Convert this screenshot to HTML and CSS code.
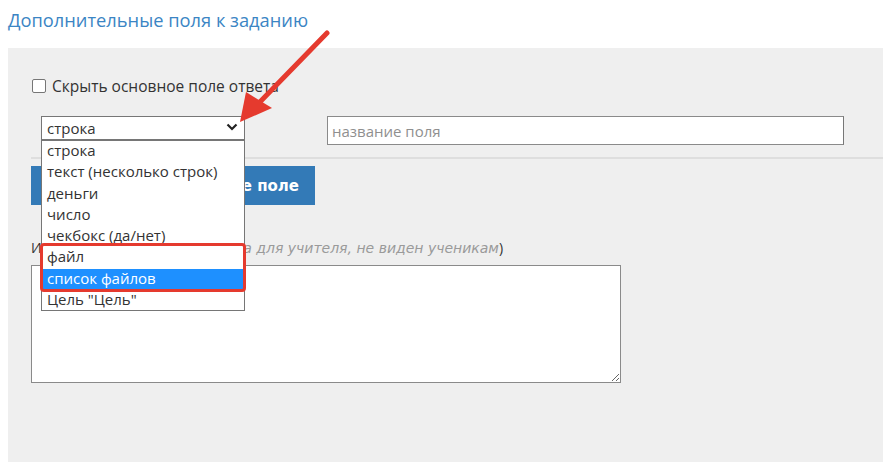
FILE: index.html
```html
<!DOCTYPE html>
<html lang="ru">

<head>
    <meta charset="UTF-8">
    <meta name="viewport" content="width=device-width, initial-scale=1.0">
    <title>Дополнительные поля</title>
    <link rel="stylesheet" href="styles.css">
</head>

<body>
    <h3 class="title">Дополнительные поля к заданию</h3>
    <div class="panel">
        <label class="hide-main">
            <span class="check"></span>
            Скрыть основное поле ответа
        </label>

        <div class="field-row">
            <div class="select-wrap">
                <div class="select">
                    <span>строка</span>
                    <svg class="chevron" width="12" height="8" viewBox="0 0 12 8">
                        <path d="M1.5 1.5 L6 6 L10.5 1.5" fill="none" stroke="#222" stroke-width="2.2" />
                    </svg>
                </div>
                <ul class="options">
                    <li>строка</li>
                    <li>текст (несколько строк)</li>
                    <li>деньги</li>
                    <li>число</li>
                    <li>чекбокс (да/нет)</li>
                    <li>файл</li>
                    <li class="selected">список файлов</li>
                    <li>Цель "Цель"</li>
                </ul>
                <div class="mark"></div>
            </div>
            <input class="name-input" type="text" placeholder="название поля">
        </div>

        <div class="line"></div>

        <button class="btn-add">Добавить новое поле</button>

        <div class="note-label">Инструкция (<i>только подсказка для учителя, не виден ученикам</i>)</div>
        <textarea class="note"></textarea>
    </div>

    <!-- стрелка поверх -->
    <svg class="arrow" width="883" height="472" viewBox="0 0 883 472">
        <line x1="327" y1="33" x2="256" y2="106" stroke="#e53a2e" stroke-width="5" stroke-linecap="round" />
        <polygon points="240,122 246,92 272,108" fill="#e53a2e" />
    </svg>
</body>

</html>
```

FILE: styles.css
```css
* {
    margin: 0;
    padding: 0;
    box-sizing: border-box;
}

body {
    font-family: "Open Sans", "Liberation Sans", sans-serif;
    color: #333;
    background: #fff;
    width: 883px;
    height: 472px;
    overflow: hidden;
}

ul {
    list-style: none;
}

.title {
    height: 48px;
    padding: 7px 0 0 8px;
    font-size: 18.3px;
    font-weight: normal;
    color: #3b85c4;
}

.panel {
    margin-left: 8px;
    height: 414px;
    background: #efefef;
    padding: 29px 0 0 23px;
}

.hide-main {
    display: flex;
    align-items: center;
    gap: 6px;
    font-size: 15.5px;
    height: 18px;
    padding-left: 1px;
}

.check {
    width: 14px;
    height: 14px;
    border: 1px solid #767676;
    border-radius: 2px;
    background: #fff;
}

.field-row {
    display: flex;
    align-items: flex-start;
    margin-top: 21px;
    padding-left: 10px;
}

.select-wrap {
    position: relative;
    width: 204px;
}

.select {
    height: 24px;
    border: 1px solid #767676;
    background: #fff;
    display: flex;
    align-items: center;
    justify-content: space-between;
    padding: 0 6px 0 5px;
    font-size: 15px;
}

.select span {
    margin-top: -1px;
}

.chevron {
    margin-top: -2px;
}

.options {
    position: absolute;
    left: 0;
    top: 24px;
    width: 204px;
    height: 171px;
    background: #fff;
    border: 1px solid #767676;
    z-index: 5;
}

.options li {
    height: 21.3px;
    line-height: 19px;
    padding-left: 5px;
    font-size: 15px;
    white-space: nowrap;
}

.options .selected {
    background: #1e90ff;
    color: #fff;
}

.mark {
    position: absolute;
    left: -1px;
    top: 127px;
    width: 206px;
    height: 49px;
    border: 3px solid #e53a2e;
    border-radius: 4px;
    z-index: 6;
}

.name-input {
    margin-left: 82px;
    width: 517px;
    height: 29px;
    border: 1px solid #8a8a8a;
    border-right-color: #777;
    padding-left: 4px;
    font-family: inherit;
    font-size: 15px;
    background: #fff;
}

.name-input::placeholder {
    color: #8f8f8f;
}

.line {
    height: 2px;
    background: #dedede;
    margin-top: 12px;
}

.btn-add {
    display: block;
    margin-top: 7px;
    width: 284px;
    height: 39px;
    border: none;
    background: #337ab7;
    color: #fff;
    font-family: "DejaVu Sans", sans-serif;
    font-weight: bold;
    font-size: 15px;
    text-align: right;
    padding-right: 16px;
}

.note-label {
    margin-top: 33px;
    font-size: 14px;
    color: #333;
}

.note-label i {
    font-family: "DejaVu Sans", Verdana, sans-serif;
    font-size: 14px;
    color: #9a9a9a;
}

.note {
    display: block;
    margin-top: 8px;
    width: 590px;
    height: 118px;
    border: 1px solid #8a8a8a;
    background: #fff;
}

.arrow {
    position: absolute;
    left: 0;
    top: 0;
    pointer-events: none;
    z-index: 10;
}
```
